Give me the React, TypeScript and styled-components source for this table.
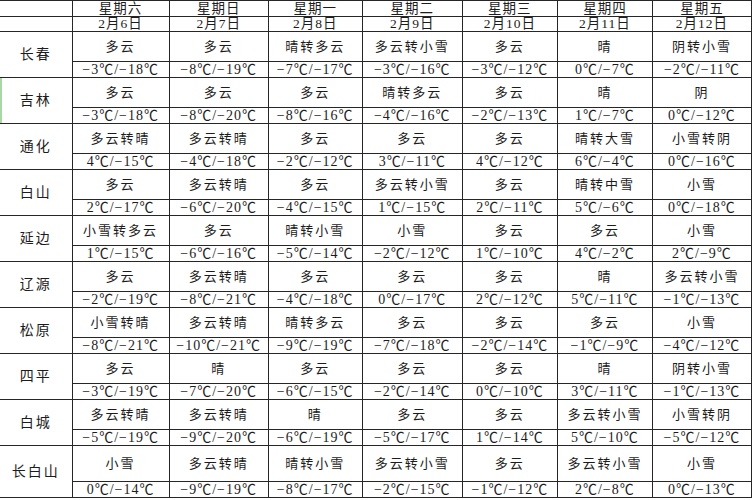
import React from 'react';
import styled, { createGlobalStyle } from 'styled-components';

type Day = { week: string; date: string };
type Cell = [string, string];
type City = { name: string; cells: Cell[] };

const days: Day[] = [
  { week: '星期六', date: '2月6日' },
  { week: '星期日', date: '2月7日' },
  { week: '星期一', date: '2月8日' },
  { week: '星期二', date: '2月9日' },
  { week: '星期三', date: '2月10日' },
  { week: '星期四', date: '2月11日' },
  { week: '星期五', date: '2月12日' },
];

const widths = [72, 97, 99, 94, 100, 95, 95, 99];

const cities: City[] = [
  {
    name: '长春',
    cells: [
      ['多云', '-3℃/-18℃'],
      ['多云', '-8℃/-19℃'],
      ['晴转多云', '-7℃/-17℃'],
      ['多云转小雪', '-3℃/-16℃'],
      ['多云', '-3℃/-12℃'],
      ['晴', '0℃/-7℃'],
      ['阴转小雪', '-2℃/-11℃'],
    ],
  },
  {
    name: '吉林',
    cells: [
      ['多云', '-3℃/-18℃'],
      ['多云', '-8℃/-20℃'],
      ['多云', '-8℃/-16℃'],
      ['晴转多云', '-4℃/-16℃'],
      ['多云', '-2℃/-13℃'],
      ['晴', '1℃/-7℃'],
      ['阴', '0℃/-12℃'],
    ],
  },
  {
    name: '通化',
    cells: [
      ['多云转晴', '4℃/-15℃'],
      ['多云转晴', '-4℃/-18℃'],
      ['多云', '-2℃/-12℃'],
      ['多云', '3℃/-11℃'],
      ['多云', '4℃/-12℃'],
      ['晴转大雪', '6℃/-4℃'],
      ['小雪转阴', '0℃/-16℃'],
    ],
  },
  {
    name: '白山',
    cells: [
      ['多云', '2℃/-17℃'],
      ['多云转晴', '-6℃/-20℃'],
      ['多云', '-4℃/-15℃'],
      ['多云转小雪', '1℃/-15℃'],
      ['多云', '2℃/-11℃'],
      ['晴转中雪', '5℃/-6℃'],
      ['小雪', '0℃/-18℃'],
    ],
  },
  {
    name: '延边',
    cells: [
      ['小雪转多云', '1℃/-15℃'],
      ['多云', '-6℃/-16℃'],
      ['晴转小雪', '-5℃/-14℃'],
      ['小雪', '-2℃/-12℃'],
      ['多云', '1℃/-10℃'],
      ['多云', '4℃/-2℃'],
      ['小雪', '2℃/-9℃'],
    ],
  },
  {
    name: '辽源',
    cells: [
      ['多云', '-2℃/-19℃'],
      ['多云转晴', '-8℃/-21℃'],
      ['多云', '-4℃/-18℃'],
      ['多云', '0℃/-17℃'],
      ['多云', '2℃/-12℃'],
      ['晴', '5℃/-11℃'],
      ['多云转小雪', '-1℃/-13℃'],
    ],
  },
  {
    name: '松原',
    cells: [
      ['小雪转晴', '-8℃/-21℃'],
      ['多云转晴', '-10℃/-21℃'],
      ['晴转多云', '-9℃/-19℃'],
      ['多云', '-7℃/-18℃'],
      ['多云', '-2℃/-14℃'],
      ['多云', '-1℃/-9℃'],
      ['小雪', '-4℃/-12℃'],
    ],
  },
  {
    name: '四平',
    cells: [
      ['多云', '-3℃/-19℃'],
      ['晴', '-7℃/-20℃'],
      ['多云', '-6℃/-15℃'],
      ['多云', '-2℃/-14℃'],
      ['多云', '0℃/-10℃'],
      ['晴', '3℃/-11℃'],
      ['阴转小雪', '-1℃/-13℃'],
    ],
  },
  {
    name: '白城',
    cells: [
      ['多云转晴', '-5℃/-19℃'],
      ['多云转晴', '-9℃/-20℃'],
      ['晴', '-6℃/-19℃'],
      ['多云', '-5℃/-17℃'],
      ['多云', '1℃/-14℃'],
      ['多云转小雪', '5℃/-10℃'],
      ['小雪转阴', '-5℃/-12℃'],
    ],
  },
  {
    name: '长白山',
    cells: [
      ['小雪', '0℃/-14℃'],
      ['多云转晴', '-9℃/-19℃'],
      ['晴转小雪', '-8℃/-17℃'],
      ['多云转小雪', '-2℃/-15℃'],
      ['多云', '-1℃/-12℃'],
      ['多云转小雪', '2℃/-8℃'],
      ['小雪', '0℃/-13℃'],
    ],
  },
];

// minus in the sheet is drawn wide, like an en dash
const fmt = (t: string) => t.replace(/-/g, '−');

export default function App() {
  return (
    <>
      <GlobalStyle />
      <Sheet>
        <colgroup>
          {widths.map((w, i) => (
            <col key={i} style={{ width: w }} />
          ))}
        </colgroup>
        <tbody>
          <HeadRow h={16}>
            <NameCell />
            {days.map((d) => (
              <Td key={d.week}>{d.week}</Td>
            ))}
          </HeadRow>
          <HeadRow h={15}>
            <NameCell />
            {days.map((d) => (
              <Td key={d.date}>{d.date}</Td>
            ))}
          </HeadRow>
          {cities.map((c, idx) => {
            const last = idx === cities.length - 1;
            return (
              <React.Fragment key={c.name}>
                <WeatherRow h={last ? 36 : 30}>
                  <NameCell rowSpan={2} marked={c.name === '吉林'}>
                    {c.name}
                  </NameCell>
                  {c.cells.map((cell, i) => (
                    <Td key={i}>{cell[0]}</Td>
                  ))}
                </WeatherRow>
                <TempRow>
                  {c.cells.map((cell, i) => (
                    <TempTd key={i}>{fmt(cell[1])}</TempTd>
                  ))}
                </TempRow>
              </React.Fragment>
            );
          })}
        </tbody>
      </Sheet>
    </>
  );
}

const GlobalStyle = createGlobalStyle`
  html, body {
    margin: 0;
    padding: 0;
    background: #fff;
  }
  body {
    font-family: "Liberation Serif", "Noto Sans CJK SC", serif;
    color: #1c1c1c;
  }
`;

const Sheet = styled.table`
  border-collapse: collapse;
  table-layout: fixed;
  width: 752px;
  border-top: 1px solid #d8d8d8;
  font-size: 13px;
  line-height: 1;
`;

const HeadRow = styled.tr<{ h: number }>`
  height: ${(p) => p.h}px;
  font-size: 13.5px;
  letter-spacing: 1px;
`;

const WeatherRow = styled.tr<{ h: number }>`
  height: ${(p) => p.h}px;
  letter-spacing: 2px;
`;

const TempRow = styled.tr`
  height: 16px;
`;

const Td = styled.td`
  border: 1px solid #262626;
  padding: 0;
  text-align: center;
  vertical-align: middle;
  white-space: nowrap;
  overflow: hidden;
`;

const TempTd = styled(Td)`
  font-size: 14px;
  letter-spacing: 1px;
`;

const NameCell = styled(Td)<{ marked?: boolean }>`
  border-left: none;
  font-size: 14px;
  letter-spacing: 2px;
  box-shadow: ${(p) => (p.marked ? 'inset 2px 0 0 #a9d8a4' : 'none')};
`;
